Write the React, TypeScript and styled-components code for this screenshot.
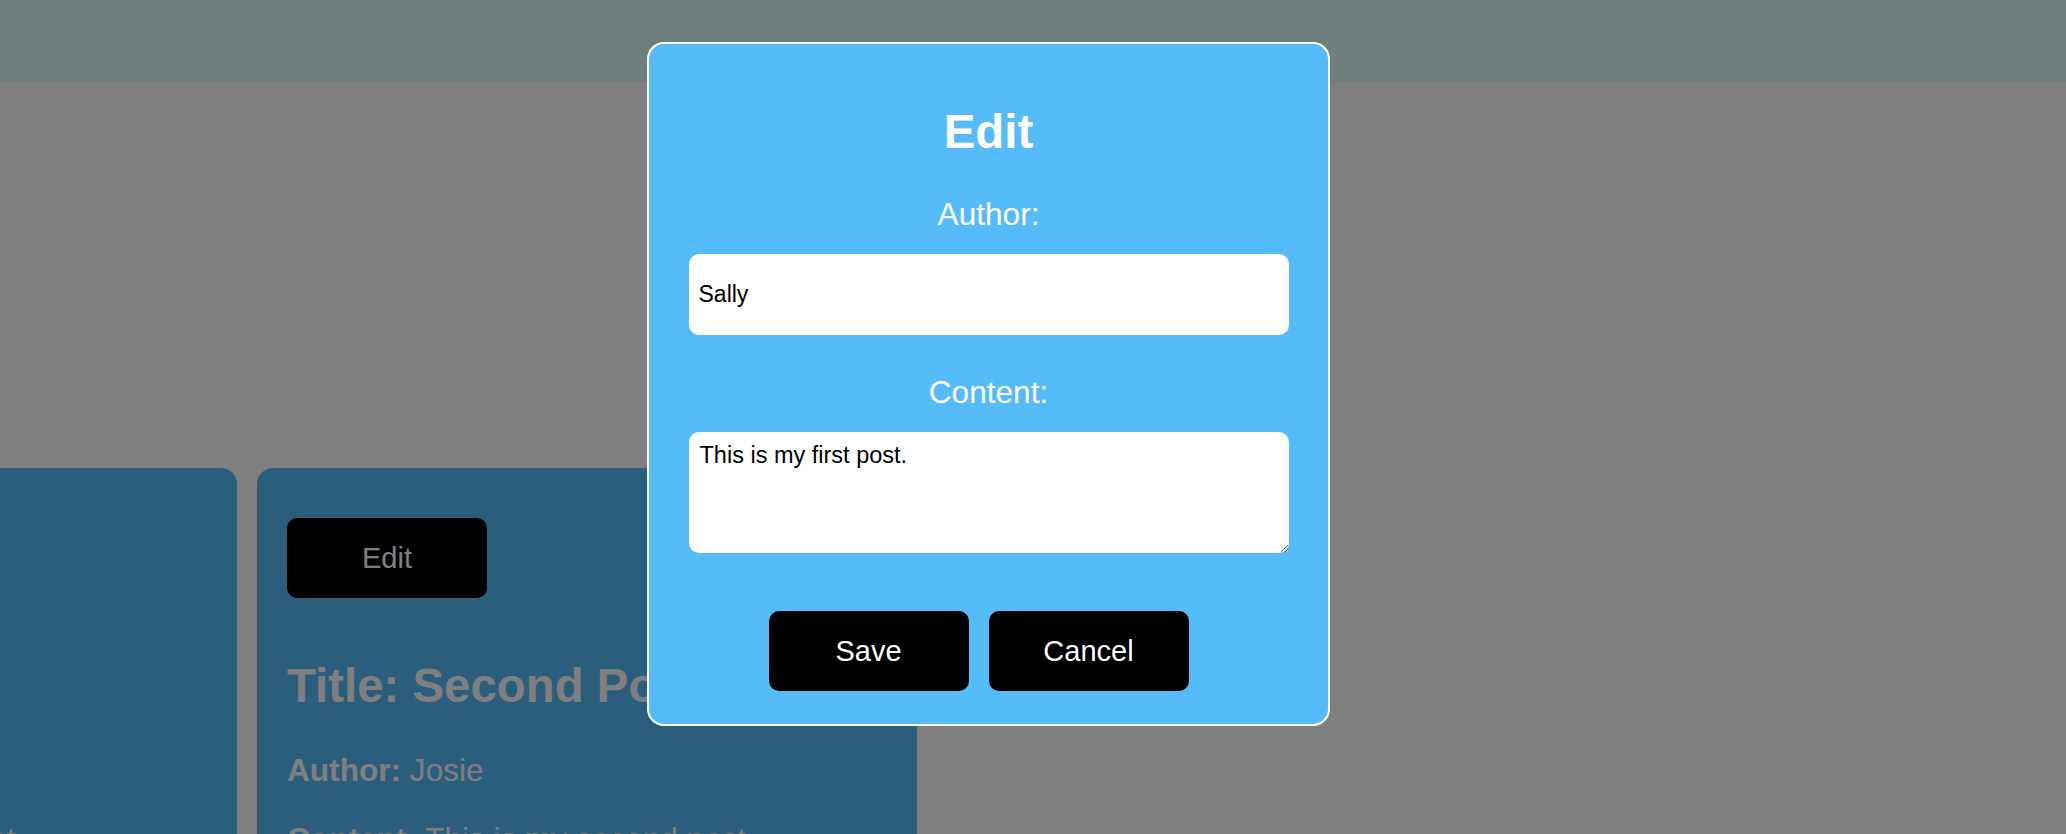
import React from 'react';
import styled, { createGlobalStyle } from 'styled-components';

const GlobalStyle = createGlobalStyle`
  html, body {
    margin: 0;
    padding: 0;
    background: #ffffff;
    font-family: 'Liberation Sans', Arial, Helvetica, sans-serif;
  }
  body {
    overflow: hidden;
  }
`;

const Page = styled.div`
  width: 100vw;
  height: 834px;
  overflow: hidden;
  display: flex;
  flex-direction: column;
`;

const Header = styled.header`
  height: 82px;
  flex-shrink: 0;
  background: #defefc;
`;

const PostList = styled.main`
  display: flex;
  gap: 20px;
  margin-top: 386px;
  margin-left: -423px;
`;

const Card = styled.article`
  flex-shrink: 0;
  width: 660px;
  min-height: 500px;
  box-sizing: border-box;
  padding: 50px 30px;
  background: #56bcf9;
  border-radius: 16px;
  color: #ffffff;
`;

const DarkButton = styled.button`
  width: 200px;
  height: 80px;
  border: none;
  border-radius: 10px;
  background: #000000;
  color: #ffffff;
  font-family: 'Liberation Sans', Arial, Helvetica, sans-serif;
  font-size: 29px;
  cursor: pointer;
`;

const CardTitle = styled.h2`
  margin: 60px 0 0;
  font-size: 47.4px;
  font-weight: 700;
  white-space: nowrap;
`;

const CardLine = styled.p<{ $gap: number }>`
  margin: ${(p) => p.$gap}px 0 0;
  font-size: 31.6px;
  white-space: nowrap;

  strong {
    font-weight: 700;
  }
`;

const Overlay = styled.div`
  position: fixed;
  inset: 0;
  background: rgba(0, 0, 0, 0.5);
`;

const Modal = styled.div`
  position: fixed;
  left: 647px;
  top: 42px;
  width: 683px;
  height: 684px;
  box-sizing: border-box;
  padding: 60px 40px 30px;
  background: #56bcf9;
  border: 2px solid #ffffff;
  border-radius: 17px;
  display: flex;
  flex-direction: column;
  align-items: center;
  color: #ffffff;
`;

const ModalTitle = styled.h2`
  margin: 0;
  font-size: 47.4px;
  font-weight: 700;
`;

const FieldLabel = styled.label<{ $gap: number }>`
  margin-top: ${(p) => p.$gap}px;
  font-size: 31.6px;
`;

const TextInput = styled.input`
  margin-top: 21px;
  width: 600px;
  height: 81px;
  box-sizing: border-box;
  padding: 0 10px;
  border: none;
  border-radius: 10px;
  background: #ffffff;
  color: #000000;
  font-family: 'Liberation Sans', Arial, Helvetica, sans-serif;
  font-size: 23px;
  outline: none;
`;

const TextArea = styled.textarea`
  margin-top: 21px;
  width: 600px;
  height: 121px;
  box-sizing: border-box;
  padding: 10px 11px;
  border: none;
  border-radius: 10px;
  background: #ffffff;
  color: #000000;
  font-family: 'Liberation Sans', Arial, Helvetica, sans-serif;
  font-size: 23.5px;
  outline: none;
`;

const Actions = styled.div`
  margin-top: 58px;
  display: flex;

  & > button {
    margin-right: 20px;
  }
`;

const posts = [
  { title: 'First Post', author: 'Sally', content: 'This is my first post.' },
  { title: 'Second Post', author: 'Josie', content: 'This is my second post.' },
];

export default function App() {
  return (
    <>
      <GlobalStyle />
      <Page>
        <Header />
        <PostList>
          {posts.map((post) => (
            <Card key={post.title}>
              <DarkButton>Edit</DarkButton>
              <CardTitle>Title: {post.title}</CardTitle>
              <CardLine $gap={39}>
                <strong>Author:</strong> {post.author}
              </CardLine>
              <CardLine $gap={32}>
                <strong>Content:</strong> {post.content}
              </CardLine>
            </Card>
          ))}
        </PostList>
      </Page>
      <Overlay />
      <Modal>
        <ModalTitle>Edit</ModalTitle>
        <FieldLabel $gap={37} htmlFor="author">
          Author:
        </FieldLabel>
        <TextInput id="author" defaultValue="Sally" />
        <FieldLabel $gap={39} htmlFor="content">
          Content:
        </FieldLabel>
        <TextArea id="content" defaultValue="This is my first post." />
        <Actions>
          <DarkButton>Save</DarkButton>
          <DarkButton>Cancel</DarkButton>
        </Actions>
      </Modal>
    </>
  );
}
